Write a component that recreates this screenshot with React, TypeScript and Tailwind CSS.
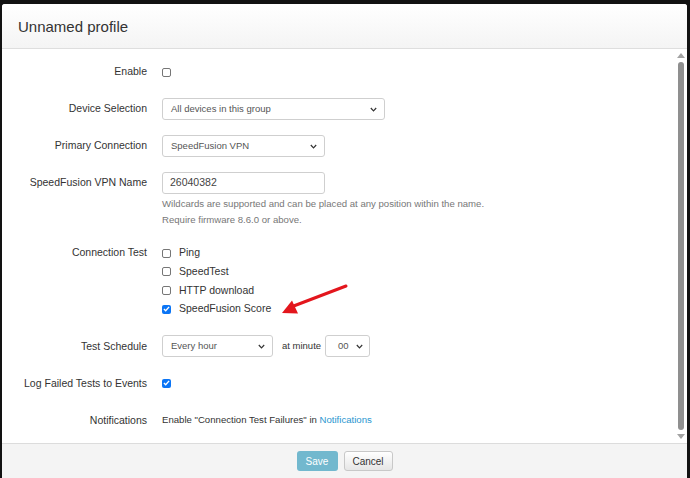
import React from 'react'

function Chevron() {
  return (
    <svg width="7" height="5" viewBox="0 0 7 5" className="shrink-0">
      <path d="M0.8 1 L3.5 3.8 L6.2 1" fill="none" stroke="#333" strokeWidth="1.2" />
    </svg>
  )
}

function Select({ value, width }: { value: string; width: string }) {
  return (
    <div className={`${width} h-[22px] flex items-center justify-between pl-[8px] pr-[7px] bg-white border border-[#cfcfcf] rounded-[3px] text-[9.5px] text-[#555]`}>
      <span>{value}</span>
      <Chevron />
    </div>
  )
}

function Box({ checked = false }: { checked?: boolean }) {
  if (checked) {
    return (
      <span className="w-[9px] h-[9px] rounded-[2px] bg-[#0b75f5] flex items-center justify-center shrink-0">
        <svg width="7" height="6" viewBox="0 0 7 6">
          <path d="M0.9 3.1 L2.7 4.8 L6.1 0.9" fill="none" stroke="#fff" strokeWidth="1.4" />
        </svg>
      </span>
    )
  }
  return <span className="w-[9px] h-[9px] rounded-[2px] bg-white border border-[#767676] shrink-0" />
}

function Row({ label, children, className = '' }: { label: string; children: React.ReactNode; className?: string }) {
  return (
    <div className={`grid grid-cols-[145px_1fr] gap-x-[15px] ${className}`}>
      <div className="h-[22px] flex items-center justify-end text-[10.5px] text-[#333]">{label}</div>
      <div className="min-h-[22px] flex items-center">{children}</div>
    </div>
  )
}

export default function App() {
  const tests = [
    { name: 'Ping', checked: false },
    { name: 'SpeedTest', checked: false },
    { name: 'HTTP download', checked: false },
    { name: 'SpeedFusion Score', checked: true },
  ]

  return (
    <div className="relative w-[690px] h-[478px] overflow-hidden bg-[#121212] pt-[4px] pl-[2px] font-['Liberation_Sans',Arial,sans-serif]">
      <div className="w-[685px] h-[474px] bg-white flex flex-col rounded-t-[3px] overflow-hidden">

        {/* Header */}
        <div className="h-[45px] shrink-0 border-b border-[#dedede] bg-gradient-to-b from-white to-[#f4f4f4] pl-[16px] flex items-center">
          <h1 className="text-[15px] text-[#333] pt-[2px]">Unnamed profile</h1>
        </div>

        {/* Body */}
        <div className="h-[394px] shrink-0 flex">
          <div className="flex-1 pt-[12px]">
            <Row label="Enable" className="mb-[15px]">
              <Box />
            </Row>

            <Row label="Device Selection" className="mb-[15px]">
              <Select value="All devices in this group" width="w-[223px]" />
            </Row>

            <Row label="Primary Connection" className="mb-[15px]">
              <Select value="SpeedFusion VPN" width="w-[163px]" />
            </Row>

            <Row label="SpeedFusion VPN Name">
              <div className="w-[163px] h-[22px] flex items-center px-[7px] bg-white border border-[#cfcfcf] rounded-[3px] text-[10.5px] text-[#444]">
                26040382
              </div>
            </Row>
            <div className="grid grid-cols-[145px_1fr] gap-x-[15px] mt-[2px] mb-[16px]">
              <div />
              <div className="text-[9.6px] leading-[16px] text-[#777]">
                <p>Wildcards are supported and can be placed at any position within the name.</p>
                <p>Require firmware 8.6.0 or above.</p>
              </div>
            </div>

            <div className="grid grid-cols-[145px_1fr] gap-x-[15px] mb-[17px]">
              <div className="h-[18.6px] flex items-center justify-end text-[10.5px] text-[#333]">Connection Test</div>
              <div>
                {tests.map((t) => (
                  <label key={t.name} className="h-[18.6px] flex items-center gap-[8px] text-[10.5px] text-[#333]">
                    <Box checked={t.checked} />
                    <span>{t.name}</span>
                  </label>
                ))}
              </div>
            </div>

            <Row label="Test Schedule" className="mb-[15px]">
              <Select value="Every hour" width="w-[111px]" />
              <span className="ml-[9px] mr-[4px] text-[9.5px] text-[#333]">at minute</span>
              <div className="w-[45px] h-[22px] flex items-center justify-between pl-[12px] pr-[6px] bg-white border border-[#cfcfcf] rounded-[3px] text-[9.5px] text-[#555]">
                <span>00</span>
                <Chevron />
              </div>
            </Row>

            <Row label="Log Failed Tests to Events" className="mb-[15px]">
              <Box checked />
            </Row>

            <Row label="Notifications">
              <span className="text-[9.6px] text-[#333]">
                Enable "Connection Test Failures" in <span className="text-[#2a96cf]">Notifications</span>
              </span>
            </Row>
          </div>

          {/* Scrollbar */}
          <div className="w-[10px] mr-[1px] flex flex-col items-center pt-[4px] pb-[4px]">
            <svg width="8" height="5" viewBox="0 0 8 5"><path d="M4 0 L8 5 L0 5 Z" fill="#a3a3a3" /></svg>
            <div className="w-[6px] flex-1 mt-[4px] mb-[4px] rounded-full bg-[#8f8f8f]" />
            <svg width="8" height="5" viewBox="0 0 8 5"><path d="M0 0 L8 0 L4 5 Z" fill="#a3a3a3" /></svg>
          </div>
        </div>

        {/* Footer */}
        <div className="flex-1 border-t border-[#dcdcdc] bg-[#f4f4f4] flex justify-center items-start pt-[7px] gap-[6px]">
          <button className="w-[41px] h-[20px] rounded-[3px] bg-[#72b8ce] text-white text-[10px]">Save</button>
          <button className="w-[49px] h-[20px] rounded-[3px] border border-[#c8c8c8] bg-gradient-to-b from-white to-[#e6e6e6] text-[#333] text-[10px]">Cancel</button>
        </div>
      </div>

      {/* Annotation arrow */}
      <svg className="absolute left-0 top-0 pointer-events-none" width="690" height="478">
        <line x1="346" y1="286" x2="291" y2="307" stroke="#e3161d" strokeWidth="3" strokeLinecap="round" />
        <path d="M282 313 L292 300.5 L298 313.5 Z" fill="#e3161d" />
      </svg>
    </div>
  )
}
